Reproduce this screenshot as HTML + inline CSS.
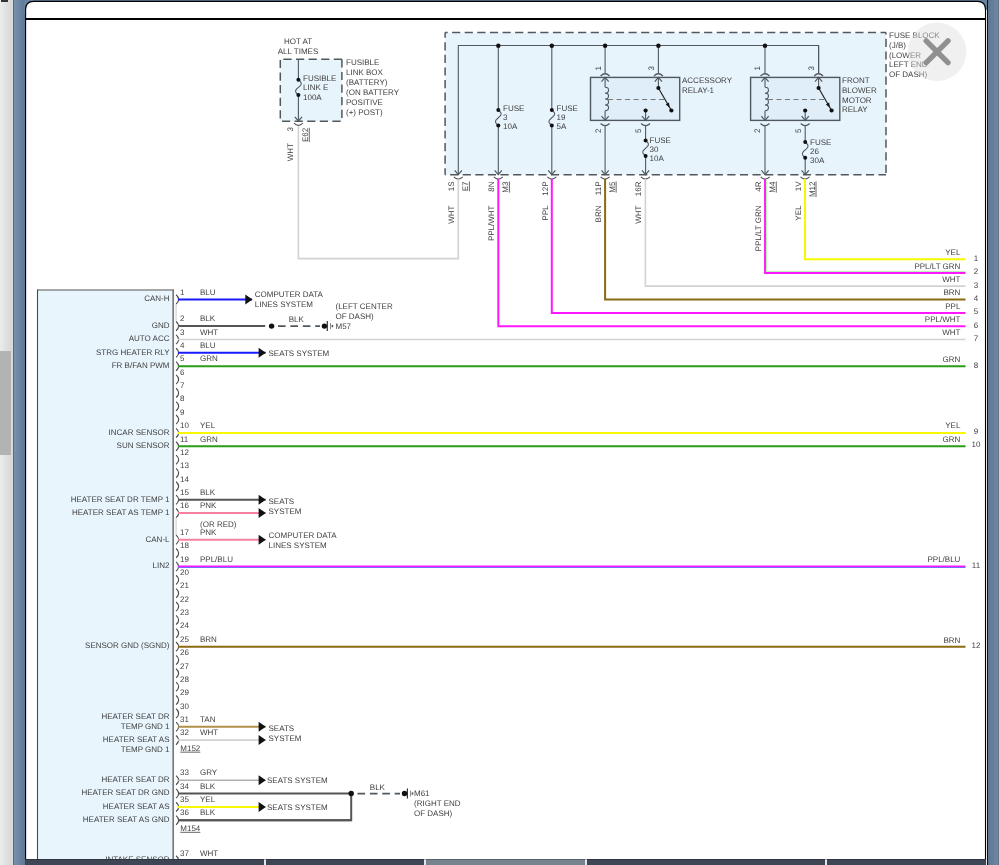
<!DOCTYPE html><html><head><meta charset="utf-8"><style>html,body{margin:0;padding:0;width:999px;height:865px;overflow:hidden;background:#fff}svg{display:block;will-change:transform}text{font-family:"Liberation Sans",sans-serif;text-rendering:geometricPrecision}</style></head><body>
<svg width="999" height="865" viewBox="0 0 999 865">
<defs><linearGradient id="bl" x1="0" x2="1" y1="0" y2="0"><stop offset="0" stop-color="#7791b0"/><stop offset="1" stop-color="#5d7592"/></linearGradient><linearGradient id="br" x1="0" x2="1" y1="0" y2="0"><stop offset="0" stop-color="#5c748e"/><stop offset="1" stop-color="#6f8aa8"/></linearGradient><linearGradient id="sb" x1="0" x2="1" y1="0" y2="0"><stop offset="0" stop-color="#ececec"/><stop offset="1" stop-color="#d6d6d6"/></linearGradient></defs>
<rect x="0" y="0" width="12" height="865" fill="url(#sb)"/>
<rect x="0" y="351" width="11" height="104" fill="#b3b3b3"/>
<rect x="11" y="0" width="2" height="865" fill="#dcd8de"/>
<rect x="13" y="0" width="1.2" height="865" fill="#66685c"/>
<rect x="14" y="0" width="12" height="865" fill="url(#bl)"/>
<rect x="987" y="0" width="12" height="865" fill="url(#br)"/>
<rect x="998" y="0" width="1" height="865" fill="#6a727c"/>
<rect x="24" y="0" width="964" height="14" fill="#6783a0"/>
<path d="M1,0 h7 v2 h-7 z" fill="#333"/>
<path d="M25.6,865 V9.6 C25.6,4.5 28.5,1.4 33.6,1.4 H977.5 C982.6,1.4 985.5,4.5 985.5,9.6 V865 Z" fill="#fff" stroke="#000" stroke-width="1.1"/>
<rect x="986" y="10" width="1" height="865" fill="#e4e4e4"/>
<rect x="987" y="0" width="1" height="865" fill="#0a1420"/>
<line x1="25" y1="19" x2="986" y2="19" stroke="#000" stroke-width="1.8"/>
<rect x="280.3" y="59.3" width="61.599999999999966" height="62.0" fill="#e8f4fc"/>
<line x1="280.3" y1="59.3" x2="341.9" y2="59.3" stroke="#50585e" stroke-width="1.5" stroke-dasharray="8.2 4.4" stroke-dashoffset="9.5"/>
<line x1="280.3" y1="59.3" x2="280.3" y2="121.3" stroke="#50585e" stroke-width="1.5" stroke-dasharray="8.2 4.4" stroke-dashoffset="12.0"/>
<line x1="341.9" y1="59.3" x2="341.9" y2="121.3" stroke="#50585e" stroke-width="1.5" stroke-dasharray="8.2 4.4" stroke-dashoffset="0.0"/>
<line x1="280.3" y1="121.3" x2="341.9" y2="121.3" stroke="#50585e" stroke-width="1.5" stroke-dasharray="8.2 4.4" stroke-dashoffset="10.9"/>
<text x="298" y="43.8" text-anchor="middle" font-size="8" fill="#3f3f3f" >HOT AT</text>
<text x="298" y="53.8" text-anchor="middle" font-size="8" fill="#3f3f3f" >ALL TIMES</text>
<text x="346" y="65" text-anchor="start" font-size="8" fill="#3f3f3f" >FUSIBLE</text>
<text x="346" y="75" text-anchor="start" font-size="8" fill="#3f3f3f" >LINK BOX</text>
<text x="346" y="85" text-anchor="start" font-size="8" fill="#3f3f3f" >(BATTERY)</text>
<text x="346" y="95" text-anchor="start" font-size="8" fill="#3f3f3f" >(ON BATTERY</text>
<text x="346" y="105" text-anchor="start" font-size="8" fill="#3f3f3f" >POSITIVE</text>
<text x="346" y="115" text-anchor="start" font-size="8" fill="#3f3f3f" >(+) POST)</text>
<line x1="298.4" y1="59.5" x2="298.4" y2="79.7" stroke="#50585e" stroke-width="1.1" />
<line x1="298.4" y1="95" x2="298.4" y2="121" stroke="#50585e" stroke-width="1.1" />
<path d="M298.40,79.70 L299.27,80.47 L300.05,81.23 L300.67,82.00 L301.06,82.76 L301.20,83.53 L301.06,84.29 L300.67,85.06 L300.05,85.82 L299.27,86.59 L298.40,87.35 L297.53,88.12 L296.75,88.88 L296.13,89.64 L295.74,90.41 L295.60,91.17 L295.74,91.94 L296.13,92.70 L296.75,93.47 L297.53,94.23 L298.40,95.00" stroke="#50585e" stroke-width="1.1" fill="none" />
<text x="303" y="80.7" text-anchor="start" font-size="8" fill="#3f3f3f" >FUSIBLE</text>
<text x="303" y="90.2" text-anchor="start" font-size="8" fill="#3f3f3f" >LINK E</text>
<text x="303" y="99.7" text-anchor="start" font-size="8" fill="#3f3f3f" >100A</text>
<path d="M294.79999999999995,116.8 L298.4,121 L302.0,116.8" stroke="#50585e" stroke-width="1.2" fill="none" />
<path d="M293.9,123.2 Q298.4,127.7 302.9,123.2" stroke="#50585e" stroke-width="1.2" fill="none" />
<text transform="translate(292.8,127) rotate(-90)" text-anchor="end" font-size="8" fill="#3f3f3f">3</text>
<text transform="translate(307.8,127.8) rotate(-90)" text-anchor="end" font-size="8" fill="#3f3f3f" text-decoration="underline">E62</text>
<text transform="translate(292.8,143) rotate(-90)" text-anchor="end" font-size="8" fill="#3f3f3f">WHT</text>
<rect x="445.1" y="32.6" width="440.9" height="142.1" fill="#e8f4fc"/>
<line x1="445.1" y1="32.6" x2="886" y2="32.6" stroke="#50585e" stroke-width="1.5" stroke-dasharray="8.2 4.4" stroke-dashoffset="5.6"/>
<line x1="445.1" y1="32.6" x2="445.1" y2="174.7" stroke="#50585e" stroke-width="1.5" stroke-dasharray="8.2 4.4" stroke-dashoffset="3.0"/>
<line x1="886" y1="32.6" x2="886" y2="174.7" stroke="#50585e" stroke-width="1.5" stroke-dasharray="8.2 4.4" stroke-dashoffset="6.4"/>
<line x1="445.1" y1="174.7" x2="886" y2="174.7" stroke="#50585e" stroke-width="1.5" stroke-dasharray="8.2 4.4" stroke-dashoffset="7.6"/>
<text x="889" y="37.9" text-anchor="start" font-size="8" fill="#3f3f3f" >FUSE BLOCK</text>
<text x="889" y="47.7" text-anchor="start" font-size="8" fill="#3f3f3f" >(J/B)</text>
<text x="889" y="57.5" text-anchor="start" font-size="8" fill="#3f3f3f" >(LOWER</text>
<text x="889" y="67.3" text-anchor="start" font-size="8" fill="#3f3f3f" >LEFT END</text>
<text x="889" y="77.1" text-anchor="start" font-size="8" fill="#3f3f3f" >OF DASH)</text>
<path d="M458.3,174.6 V45.5 H818.6 V73.8" stroke="#50585e" stroke-width="1.1" fill="none" />
<line x1="498.3" y1="45.5" x2="498.3" y2="110" stroke="#50585e" stroke-width="1.1" />
<line x1="498.3" y1="125.5" x2="498.3" y2="174.6" stroke="#50585e" stroke-width="1.1" />
<path d="M498.30,110.00 L499.17,110.78 L499.95,111.55 L500.57,112.33 L500.96,113.10 L501.10,113.88 L500.96,114.65 L500.57,115.42 L499.95,116.20 L499.17,116.97 L498.30,117.75 L497.43,118.53 L496.65,119.30 L496.03,120.08 L495.64,120.85 L495.50,121.62 L495.64,122.40 L496.03,123.17 L496.65,123.95 L497.43,124.72 L498.30,125.50" stroke="#50585e" stroke-width="1.1" fill="none" />
<text x="503" y="110.8" text-anchor="start" font-size="8" fill="#3f3f3f" >FUSE</text>
<text x="503" y="119.7" text-anchor="start" font-size="8" fill="#3f3f3f" >3</text>
<text x="503" y="128.6" text-anchor="start" font-size="8" fill="#3f3f3f" >10A</text>
<line x1="551.8" y1="45.5" x2="551.8" y2="110" stroke="#50585e" stroke-width="1.1" />
<line x1="551.8" y1="125.5" x2="551.8" y2="174.6" stroke="#50585e" stroke-width="1.1" />
<path d="M551.80,110.00 L552.67,110.78 L553.45,111.55 L554.07,112.33 L554.46,113.10 L554.60,113.88 L554.46,114.65 L554.07,115.42 L553.45,116.20 L552.67,116.97 L551.80,117.75 L550.93,118.53 L550.15,119.30 L549.53,120.08 L549.14,120.85 L549.00,121.62 L549.14,122.40 L549.53,123.17 L550.15,123.95 L550.93,124.72 L551.80,125.50" stroke="#50585e" stroke-width="1.1" fill="none" />
<text x="556.5" y="110.8" text-anchor="start" font-size="8" fill="#3f3f3f" >FUSE</text>
<text x="556.5" y="119.7" text-anchor="start" font-size="8" fill="#3f3f3f" >19</text>
<text x="556.5" y="128.6" text-anchor="start" font-size="8" fill="#3f3f3f" >5A</text>
<path d="M454.7,170.4 L458.3,174.6 L461.90000000000003,170.4" stroke="#50585e" stroke-width="1.2" fill="none" />
<path d="M494.7,170.4 L498.3,174.6 L501.90000000000003,170.4" stroke="#50585e" stroke-width="1.2" fill="none" />
<path d="M548.1999999999999,170.4 L551.8,174.6 L555.4,170.4" stroke="#50585e" stroke-width="1.2" fill="none" />
<rect x="590.5" y="77.4" width="89.2" height="43" fill="#dfeef9" stroke="#50585e" stroke-width="1.4"/>
<line x1="605.1" y1="45.5" x2="605.1" y2="73.5" stroke="#50585e" stroke-width="1.1" />
<path d="M600.6,76 Q605.1,71.5 609.6,76" stroke="#50585e" stroke-width="1.2" fill="none" />
<path d="M601.5,81.60000000000001 L605.1,77.4 L608.7,81.60000000000001" stroke="#50585e" stroke-width="1.2" fill="none" />
<line x1="605.1" y1="77.4" x2="605.1" y2="87.2" stroke="#50585e" stroke-width="1.1" />
<path d="M605.1,87.2 C609.7,87.2 609.7,93.075 605.1,93.075 C609.7,93.075 609.7,98.95 605.1,98.95 C609.7,98.95 609.7,104.825 605.1,104.825 C609.7,104.825 609.7,110.7 605.1,110.7" stroke="#50585e" stroke-width="1.1" fill="none" />
<line x1="605.1" y1="110.7" x2="605.1" y2="120.4" stroke="#50585e" stroke-width="1.1" />
<path d="M601.5,116.2 L605.1,120.4 L608.7,116.2" stroke="#50585e" stroke-width="1.2" fill="none" />
<line x1="608.1" y1="99.5" x2="664.4" y2="99.5" stroke="#777" stroke-width="1.0" stroke-dasharray="5 3.5"/>
<line x1="658.4" y1="45.5" x2="658.4" y2="73.5" stroke="#50585e" stroke-width="1.1" />
<path d="M653.9,76 Q658.4,71.5 662.9,76" stroke="#50585e" stroke-width="1.2" fill="none" />
<path d="M654.8,81.60000000000001 L658.4,77.4 L662.0,81.60000000000001" stroke="#50585e" stroke-width="1.2" fill="none" />
<line x1="658.4" y1="77.4" x2="658.4" y2="88" stroke="#50585e" stroke-width="1.1" />
<line x1="658.4" y1="88" x2="671.4" y2="110.5" stroke="#222" stroke-width="1.2" />
<path d="M669.60,107.40 L669.00,102.55 L665.70,104.45 Z" fill="#111"/>
<line x1="645.6" y1="110.5" x2="645.6" y2="120.4" stroke="#50585e" stroke-width="1.1" />
<path d="M642.0,116.2 L645.6,120.4 L649.2,116.2" stroke="#50585e" stroke-width="1.2" fill="none" />
<path d="M600.6,123.5 Q605.1,128.0 609.6,123.5" stroke="#50585e" stroke-width="1.2" fill="none" />
<path d="M641.1,123.5 Q645.6,128.0 650.1,123.5" stroke="#50585e" stroke-width="1.2" fill="none" />
<text x="682" y="82.8" text-anchor="start" font-size="8" fill="#3f3f3f" >ACCESSORY</text>
<text x="682" y="92.6" text-anchor="start" font-size="8" fill="#3f3f3f" >RELAY-1</text>
<rect x="750.6" y="77.4" width="89.2" height="43" fill="#dfeef9" stroke="#50585e" stroke-width="1.4"/>
<line x1="765.0" y1="45.5" x2="765.0" y2="73.5" stroke="#50585e" stroke-width="1.1" />
<path d="M760.5,76 Q765.0,71.5 769.5,76" stroke="#50585e" stroke-width="1.2" fill="none" />
<path d="M761.4,81.60000000000001 L765.0,77.4 L768.6,81.60000000000001" stroke="#50585e" stroke-width="1.2" fill="none" />
<line x1="765.0" y1="77.4" x2="765.0" y2="87.2" stroke="#50585e" stroke-width="1.1" />
<path d="M765.0,87.2 C769.6,87.2 769.6,93.075 765.0,93.075 C769.6,93.075 769.6,98.95 765.0,98.95 C769.6,98.95 769.6,104.825 765.0,104.825 C769.6,104.825 769.6,110.7 765.0,110.7" stroke="#50585e" stroke-width="1.1" fill="none" />
<line x1="765.0" y1="110.7" x2="765.0" y2="120.4" stroke="#50585e" stroke-width="1.1" />
<path d="M761.4,116.2 L765.0,120.4 L768.6,116.2" stroke="#50585e" stroke-width="1.2" fill="none" />
<line x1="768.0" y1="99.5" x2="824.6" y2="99.5" stroke="#777" stroke-width="1.0" stroke-dasharray="5 3.5"/>
<line x1="818.6" y1="45.5" x2="818.6" y2="73.5" stroke="#50585e" stroke-width="1.1" />
<path d="M814.1,76 Q818.6,71.5 823.1,76" stroke="#50585e" stroke-width="1.2" fill="none" />
<path d="M815.0,81.60000000000001 L818.6,77.4 L822.2,81.60000000000001" stroke="#50585e" stroke-width="1.2" fill="none" />
<line x1="818.6" y1="77.4" x2="818.6" y2="88" stroke="#50585e" stroke-width="1.1" />
<line x1="818.6" y1="88" x2="831.6" y2="110.5" stroke="#222" stroke-width="1.2" />
<path d="M829.80,107.40 L829.20,102.55 L825.90,104.45 Z" fill="#111"/>
<line x1="805.2" y1="110.5" x2="805.2" y2="120.4" stroke="#50585e" stroke-width="1.1" />
<path d="M801.6,116.2 L805.2,120.4 L808.8000000000001,116.2" stroke="#50585e" stroke-width="1.2" fill="none" />
<path d="M760.5,123.5 Q765.0,128.0 769.5,123.5" stroke="#50585e" stroke-width="1.2" fill="none" />
<path d="M800.7,123.5 Q805.2,128.0 809.7,123.5" stroke="#50585e" stroke-width="1.2" fill="none" />
<text x="842" y="82.9" text-anchor="start" font-size="8" fill="#3f3f3f" >FRONT</text>
<text x="842" y="92.7" text-anchor="start" font-size="8" fill="#3f3f3f" >BLOWER</text>
<text x="842" y="102.5" text-anchor="start" font-size="8" fill="#3f3f3f" >MOTOR</text>
<text x="842" y="112.3" text-anchor="start" font-size="8" fill="#3f3f3f" >RELAY</text>
<text transform="translate(600.5,66) rotate(-90)" text-anchor="end" font-size="8" fill="#3f3f3f">1</text>
<text transform="translate(653.8,66) rotate(-90)" text-anchor="end" font-size="8" fill="#3f3f3f">3</text>
<text transform="translate(760.4,66) rotate(-90)" text-anchor="end" font-size="8" fill="#3f3f3f">1</text>
<text transform="translate(814.0,66) rotate(-90)" text-anchor="end" font-size="8" fill="#3f3f3f">3</text>
<text transform="translate(600.5,128.5) rotate(-90)" text-anchor="end" font-size="8" fill="#3f3f3f">2</text>
<text transform="translate(641.0,128.5) rotate(-90)" text-anchor="end" font-size="8" fill="#3f3f3f">5</text>
<text transform="translate(760.4,128.5) rotate(-90)" text-anchor="end" font-size="8" fill="#3f3f3f">2</text>
<text transform="translate(800.6,128.5) rotate(-90)" text-anchor="end" font-size="8" fill="#3f3f3f">5</text>
<line x1="605.1" y1="125" x2="605.1" y2="174.6" stroke="#50585e" stroke-width="1.1" />
<path d="M601.5,170.4 L605.1,174.6 L608.7,170.4" stroke="#50585e" stroke-width="1.2" fill="none" />
<line x1="645.6" y1="125" x2="645.6" y2="140.5" stroke="#50585e" stroke-width="1.1" />
<line x1="645.6" y1="156" x2="645.6" y2="174.6" stroke="#50585e" stroke-width="1.1" />
<path d="M645.60,140.50 L646.47,141.28 L647.25,142.05 L647.87,142.82 L648.26,143.60 L648.40,144.38 L648.26,145.15 L647.87,145.93 L647.25,146.70 L646.47,147.47 L645.60,148.25 L644.73,149.03 L643.95,149.80 L643.33,150.57 L642.94,151.35 L642.80,152.12 L642.94,152.90 L643.33,153.68 L643.95,154.45 L644.73,155.22 L645.60,156.00" stroke="#50585e" stroke-width="1.1" fill="none" />
<text x="649.6" y="142.9" text-anchor="start" font-size="8" fill="#3f3f3f" >FUSE</text>
<text x="649.6" y="151.9" text-anchor="start" font-size="8" fill="#3f3f3f" >30</text>
<text x="649.6" y="160.9" text-anchor="start" font-size="8" fill="#3f3f3f" >10A</text>
<path d="M642.0,170.4 L645.6,174.6 L649.2,170.4" stroke="#50585e" stroke-width="1.2" fill="none" />
<line x1="765.0" y1="125" x2="765.0" y2="174.6" stroke="#50585e" stroke-width="1.1" />
<path d="M761.4,170.4 L765.0,174.6 L768.6,170.4" stroke="#50585e" stroke-width="1.2" fill="none" />
<line x1="805.2" y1="125" x2="805.2" y2="142" stroke="#50585e" stroke-width="1.1" />
<line x1="805.2" y1="157.8" x2="805.2" y2="174.6" stroke="#50585e" stroke-width="1.1" />
<path d="M805.20,142.00 L806.07,142.79 L806.85,143.58 L807.47,144.37 L807.86,145.16 L808.00,145.95 L807.86,146.74 L807.47,147.53 L806.85,148.32 L806.07,149.11 L805.20,149.90 L804.33,150.69 L803.55,151.48 L802.93,152.27 L802.54,153.06 L802.40,153.85 L802.54,154.64 L802.93,155.43 L803.55,156.22 L804.33,157.01 L805.20,157.80" stroke="#50585e" stroke-width="1.1" fill="none" />
<text x="810" y="144.9" text-anchor="start" font-size="8" fill="#3f3f3f" >FUSE</text>
<text x="810" y="153.8" text-anchor="start" font-size="8" fill="#3f3f3f" >26</text>
<text x="810" y="162.7" text-anchor="start" font-size="8" fill="#3f3f3f" >30A</text>
<path d="M801.6,170.4 L805.2,174.6 L808.8000000000001,170.4" stroke="#50585e" stroke-width="1.2" fill="none" />
<path d="M453.8,176.8 Q458.3,181.3 462.8,176.8" stroke="#50585e" stroke-width="1.2" fill="none" />
<text transform="translate(454.1,181.5) rotate(-90)" text-anchor="end" font-size="8" fill="#3f3f3f">1S</text>
<text transform="translate(467.90000000000003,181.5) rotate(-90)" text-anchor="end" font-size="8" fill="#3f3f3f" text-decoration="underline">E7</text>
<text transform="translate(454.1,205.5) rotate(-90)" text-anchor="end" font-size="8" fill="#3f3f3f">WHT</text>
<path d="M493.8,176.8 Q498.3,181.3 502.8,176.8" stroke="#50585e" stroke-width="1.2" fill="none" />
<text transform="translate(494.1,181.5) rotate(-90)" text-anchor="end" font-size="8" fill="#3f3f3f">8N</text>
<text transform="translate(507.90000000000003,181.5) rotate(-90)" text-anchor="end" font-size="8" fill="#3f3f3f" text-decoration="underline">M3</text>
<text transform="translate(494.1,205.5) rotate(-90)" text-anchor="end" font-size="8" fill="#3f3f3f">PPL/WHT</text>
<path d="M547.3,176.8 Q551.8,181.3 556.3,176.8" stroke="#50585e" stroke-width="1.2" fill="none" />
<text transform="translate(547.5999999999999,181.5) rotate(-90)" text-anchor="end" font-size="8" fill="#3f3f3f">12P</text>
<text transform="translate(547.5999999999999,205.5) rotate(-90)" text-anchor="end" font-size="8" fill="#3f3f3f">PPL</text>
<path d="M600.6,176.8 Q605.1,181.3 609.6,176.8" stroke="#50585e" stroke-width="1.2" fill="none" />
<text transform="translate(600.9,181.5) rotate(-90)" text-anchor="end" font-size="8" fill="#3f3f3f">11P</text>
<text transform="translate(614.7,181.5) rotate(-90)" text-anchor="end" font-size="8" fill="#3f3f3f" text-decoration="underline">M5</text>
<text transform="translate(600.9,205.5) rotate(-90)" text-anchor="end" font-size="8" fill="#3f3f3f">BRN</text>
<path d="M640.9,176.8 Q645.4,181.3 649.9,176.8" stroke="#50585e" stroke-width="1.2" fill="none" />
<text transform="translate(641.1999999999999,181.5) rotate(-90)" text-anchor="end" font-size="8" fill="#3f3f3f">16R</text>
<text transform="translate(641.1999999999999,205.5) rotate(-90)" text-anchor="end" font-size="8" fill="#3f3f3f">WHT</text>
<path d="M760.7,176.8 Q765.2,181.3 769.7,176.8" stroke="#50585e" stroke-width="1.2" fill="none" />
<text transform="translate(761.0,181.5) rotate(-90)" text-anchor="end" font-size="8" fill="#3f3f3f">4R</text>
<text transform="translate(774.8000000000001,181.5) rotate(-90)" text-anchor="end" font-size="8" fill="#3f3f3f" text-decoration="underline">M4</text>
<text transform="translate(761.0,205.5) rotate(-90)" text-anchor="end" font-size="8" fill="#3f3f3f">PPL/LT GRN</text>
<path d="M800.5,176.8 Q805.0,181.3 809.5,176.8" stroke="#50585e" stroke-width="1.2" fill="none" />
<text transform="translate(800.8,181.5) rotate(-90)" text-anchor="end" font-size="8" fill="#3f3f3f">1V</text>
<text transform="translate(814.6,181.5) rotate(-90)" text-anchor="end" font-size="8" fill="#3f3f3f" text-decoration="underline">M12</text>
<text transform="translate(800.8,205.5) rotate(-90)" text-anchor="end" font-size="8" fill="#3f3f3f">YEL</text>
<path d="M298.4,126 V258.6 H458.3 V179" stroke="#d2d2d2" stroke-width="1.6" fill="none" stroke-linejoin="miter"/>
<path d="M498.3,179 V326.2 H965.5" stroke="#ff18ff" stroke-width="2.0" fill="none" stroke-linejoin="miter"/>
<path d="M551.8,179 V312.9 H965.5" stroke="#ff18ff" stroke-width="2.0" fill="none" stroke-linejoin="miter"/>
<path d="M605.1,179 V299.4 H965.5" stroke="#8c6a12" stroke-width="2.0" fill="none" stroke-linejoin="miter"/>
<path d="M645.4,179 V286.1 H965.5" stroke="#d2d2d2" stroke-width="1.6" fill="none" stroke-linejoin="miter"/>
<path d="M765.0,179 V273.0 H965.5" stroke="#ff18ff" stroke-width="1.9" fill="none" stroke-linejoin="miter"/>
<path d="M766.5,179 V271.5 H965.5" stroke="#b8f5b0" stroke-width="1.0" fill="none" stroke-linejoin="miter"/>
<path d="M805.0,179 V259.3 H965.5" stroke="#f8f800" stroke-width="2.0" fill="none" stroke-linejoin="miter"/>
<text x="960.4" y="255.0" text-anchor="end" font-size="8" fill="#3f3f3f" >YEL</text>
<text x="976" y="260.7" text-anchor="middle" font-size="8" fill="#3f3f3f" >1</text>
<text x="960.4" y="268.6" text-anchor="end" font-size="8" fill="#3f3f3f" >PPL/LT GRN</text>
<text x="976" y="274.3" text-anchor="middle" font-size="8" fill="#3f3f3f" >2</text>
<text x="960.4" y="281.8" text-anchor="end" font-size="8" fill="#3f3f3f" >WHT</text>
<text x="976" y="287.5" text-anchor="middle" font-size="8" fill="#3f3f3f" >3</text>
<text x="960.4" y="295.1" text-anchor="end" font-size="8" fill="#3f3f3f" >BRN</text>
<text x="976" y="300.8" text-anchor="middle" font-size="8" fill="#3f3f3f" >4</text>
<text x="960.4" y="308.6" text-anchor="end" font-size="8" fill="#3f3f3f" >PPL</text>
<text x="976" y="314.3" text-anchor="middle" font-size="8" fill="#3f3f3f" >5</text>
<text x="960.4" y="321.9" text-anchor="end" font-size="8" fill="#3f3f3f" >PPL/WHT</text>
<text x="976" y="327.6" text-anchor="middle" font-size="8" fill="#3f3f3f" >6</text>
<text x="960.4" y="335.2" text-anchor="end" font-size="8" fill="#3f3f3f" >WHT</text>
<text x="976" y="340.9" text-anchor="middle" font-size="8" fill="#3f3f3f" >7</text>
<text x="960.4" y="361.8" text-anchor="end" font-size="8" fill="#3f3f3f" >GRN</text>
<text x="976" y="367.5" text-anchor="middle" font-size="8" fill="#3f3f3f" >8</text>
<text x="960.4" y="428.4" text-anchor="end" font-size="8" fill="#3f3f3f" >YEL</text>
<text x="976" y="434.1" text-anchor="middle" font-size="8" fill="#3f3f3f" >9</text>
<text x="960.4" y="441.6" text-anchor="end" font-size="8" fill="#3f3f3f" >GRN</text>
<text x="976" y="447.3" text-anchor="middle" font-size="8" fill="#3f3f3f" >10</text>
<text x="960.4" y="562.0" text-anchor="end" font-size="8" fill="#3f3f3f" >PPL/BLU</text>
<text x="976" y="567.7" text-anchor="middle" font-size="8" fill="#3f3f3f" >11</text>
<text x="960.4" y="642.6" text-anchor="end" font-size="8" fill="#3f3f3f" >BRN</text>
<text x="976" y="648.3" text-anchor="middle" font-size="8" fill="#3f3f3f" >12</text>
<rect x="38" y="290" width="135.2" height="600" fill="#e8f5fd"/>
<line x1="37" y1="290" x2="174" y2="290" stroke="#8a8a8a" stroke-width="1.6"/>
<line x1="37.5" y1="289.5" x2="37.5" y2="865" stroke="#4a4a4a" stroke-width="1.1"/>
<line x1="173.2" y1="289.5" x2="173.2" y2="865" stroke="#7a7a7a" stroke-width="1.7"/>
<line x1="176.1" y1="304.4" x2="176.1" y2="321.11" stroke="#cccccc" stroke-width="1"/>
<line x1="176.1" y1="518.08" x2="176.1" y2="534.79" stroke="#cccccc" stroke-width="1"/>
<path d="M176.1,294.79999999999995 Q181.2,299.4 176.1,304.0" stroke="#4a4a4a" stroke-width="1.15" fill="none" />
<text x="180" y="294.6" text-anchor="start" font-size="8" fill="#3f3f3f" >1</text>
<path d="M176.1,321.51 Q181.2,326.11 176.1,330.71000000000004" stroke="#4a4a4a" stroke-width="1.15" fill="none" />
<text x="180" y="321.31" text-anchor="start" font-size="8" fill="#3f3f3f" >2</text>
<path d="M176.1,334.85999999999996 Q181.2,339.46 176.1,344.06" stroke="#4a4a4a" stroke-width="1.15" fill="none" />
<text x="180" y="334.66" text-anchor="start" font-size="8" fill="#3f3f3f" >3</text>
<path d="M176.1,348.21999999999997 Q181.2,352.82 176.1,357.42" stroke="#4a4a4a" stroke-width="1.15" fill="none" />
<text x="180" y="348.02" text-anchor="start" font-size="8" fill="#3f3f3f" >4</text>
<path d="M176.1,361.57 Q181.2,366.17 176.1,370.77000000000004" stroke="#4a4a4a" stroke-width="1.15" fill="none" />
<text x="180" y="361.37" text-anchor="start" font-size="8" fill="#3f3f3f" >5</text>
<path d="M176.1,374.92999999999995 Q181.2,379.53 176.1,384.13" stroke="#4a4a4a" stroke-width="1.15" fill="none" />
<text x="180" y="374.73" text-anchor="start" font-size="8" fill="#3f3f3f" >6</text>
<path d="M176.1,388.28 Q181.2,392.88 176.1,397.48" stroke="#4a4a4a" stroke-width="1.15" fill="none" />
<text x="180" y="388.08" text-anchor="start" font-size="8" fill="#3f3f3f" >7</text>
<path d="M176.1,401.64 Q181.2,406.24 176.1,410.84000000000003" stroke="#4a4a4a" stroke-width="1.15" fill="none" />
<text x="180" y="401.44" text-anchor="start" font-size="8" fill="#3f3f3f" >8</text>
<path d="M176.1,414.98999999999995 Q181.2,419.59 176.1,424.19" stroke="#4a4a4a" stroke-width="1.15" fill="none" />
<text x="180" y="414.79" text-anchor="start" font-size="8" fill="#3f3f3f" >9</text>
<path d="M176.1,428.34999999999997 Q181.2,432.95 176.1,437.55" stroke="#4a4a4a" stroke-width="1.15" fill="none" />
<text x="180" y="428.15" text-anchor="start" font-size="8" fill="#3f3f3f" >10</text>
<path d="M176.1,441.7 Q181.2,446.3 176.1,450.90000000000003" stroke="#4a4a4a" stroke-width="1.15" fill="none" />
<text x="180" y="441.5" text-anchor="start" font-size="8" fill="#3f3f3f" >11</text>
<path d="M176.1,455.06 Q181.2,459.66 176.1,464.26000000000005" stroke="#4a4a4a" stroke-width="1.15" fill="none" />
<text x="180" y="454.86" text-anchor="start" font-size="8" fill="#3f3f3f" >12</text>
<path d="M176.1,468.40999999999997 Q181.2,473.01 176.1,477.61" stroke="#4a4a4a" stroke-width="1.15" fill="none" />
<text x="180" y="468.21" text-anchor="start" font-size="8" fill="#3f3f3f" >13</text>
<path d="M176.1,481.77 Q181.2,486.37 176.1,490.97" stroke="#4a4a4a" stroke-width="1.15" fill="none" />
<text x="180" y="481.57" text-anchor="start" font-size="8" fill="#3f3f3f" >14</text>
<path d="M176.1,495.13 Q181.2,499.73 176.1,504.33000000000004" stroke="#4a4a4a" stroke-width="1.15" fill="none" />
<text x="180" y="494.93" text-anchor="start" font-size="8" fill="#3f3f3f" >15</text>
<path d="M176.1,508.48 Q181.2,513.08 176.1,517.6800000000001" stroke="#4a4a4a" stroke-width="1.15" fill="none" />
<text x="180" y="508.28" text-anchor="start" font-size="8" fill="#3f3f3f" >16</text>
<path d="M176.1,535.1899999999999 Q181.2,539.79 176.1,544.39" stroke="#4a4a4a" stroke-width="1.15" fill="none" />
<text x="180" y="534.99" text-anchor="start" font-size="8" fill="#3f3f3f" >17</text>
<path d="M176.1,548.54 Q181.2,553.14 176.1,557.74" stroke="#4a4a4a" stroke-width="1.15" fill="none" />
<text x="180" y="548.34" text-anchor="start" font-size="8" fill="#3f3f3f" >18</text>
<path d="M176.1,561.9 Q181.2,566.5 176.1,571.1" stroke="#4a4a4a" stroke-width="1.15" fill="none" />
<text x="180" y="561.7" text-anchor="start" font-size="8" fill="#3f3f3f" >19</text>
<path d="M176.1,575.26 Q181.2,579.86 176.1,584.46" stroke="#4a4a4a" stroke-width="1.15" fill="none" />
<text x="180" y="575.06" text-anchor="start" font-size="8" fill="#3f3f3f" >20</text>
<path d="M176.1,588.61 Q181.2,593.21 176.1,597.8100000000001" stroke="#4a4a4a" stroke-width="1.15" fill="none" />
<text x="180" y="588.41" text-anchor="start" font-size="8" fill="#3f3f3f" >21</text>
<path d="M176.1,601.97 Q181.2,606.57 176.1,611.1700000000001" stroke="#4a4a4a" stroke-width="1.15" fill="none" />
<text x="180" y="601.77" text-anchor="start" font-size="8" fill="#3f3f3f" >22</text>
<path d="M176.1,615.3199999999999 Q181.2,619.92 176.1,624.52" stroke="#4a4a4a" stroke-width="1.15" fill="none" />
<text x="180" y="615.12" text-anchor="start" font-size="8" fill="#3f3f3f" >23</text>
<path d="M176.1,628.67 Q181.2,633.27 176.1,637.87" stroke="#4a4a4a" stroke-width="1.15" fill="none" />
<text x="180" y="628.47" text-anchor="start" font-size="8" fill="#3f3f3f" >24</text>
<path d="M176.1,642.03 Q181.2,646.63 176.1,651.23" stroke="#4a4a4a" stroke-width="1.15" fill="none" />
<text x="180" y="641.83" text-anchor="start" font-size="8" fill="#3f3f3f" >25</text>
<path d="M176.1,655.39 Q181.2,659.99 176.1,664.59" stroke="#4a4a4a" stroke-width="1.15" fill="none" />
<text x="180" y="655.19" text-anchor="start" font-size="8" fill="#3f3f3f" >26</text>
<path d="M176.1,668.74 Q181.2,673.34 176.1,677.94" stroke="#4a4a4a" stroke-width="1.15" fill="none" />
<text x="180" y="668.54" text-anchor="start" font-size="8" fill="#3f3f3f" >27</text>
<path d="M176.1,682.09 Q181.2,686.69 176.1,691.2900000000001" stroke="#4a4a4a" stroke-width="1.15" fill="none" />
<text x="180" y="681.89" text-anchor="start" font-size="8" fill="#3f3f3f" >28</text>
<path d="M176.1,695.4499999999999 Q181.2,700.05 176.1,704.65" stroke="#4a4a4a" stroke-width="1.15" fill="none" />
<text x="180" y="695.25" text-anchor="start" font-size="8" fill="#3f3f3f" >29</text>
<path d="M176.1,708.8 Q181.2,713.4 176.1,718.0" stroke="#4a4a4a" stroke-width="1.15" fill="none" />
<text x="180" y="708.6" text-anchor="start" font-size="8" fill="#3f3f3f" >30</text>
<path d="M176.1,722.16 Q181.2,726.76 176.1,731.36" stroke="#4a4a4a" stroke-width="1.15" fill="none" />
<text x="180" y="721.96" text-anchor="start" font-size="8" fill="#3f3f3f" >31</text>
<path d="M176.1,735.52 Q181.2,740.12 176.1,744.72" stroke="#4a4a4a" stroke-width="1.15" fill="none" />
<text x="180" y="735.32" text-anchor="start" font-size="8" fill="#3f3f3f" >32</text>
<path d="M176.1,775.5799999999999 Q181.2,780.18 176.1,784.78" stroke="#4a4a4a" stroke-width="1.15" fill="none" />
<text x="180" y="775.38" text-anchor="start" font-size="8" fill="#3f3f3f" >33</text>
<path d="M176.1,788.93 Q181.2,793.53 176.1,798.13" stroke="#4a4a4a" stroke-width="1.15" fill="none" />
<text x="180" y="788.73" text-anchor="start" font-size="8" fill="#3f3f3f" >34</text>
<path d="M176.1,802.29 Q181.2,806.89 176.1,811.49" stroke="#4a4a4a" stroke-width="1.15" fill="none" />
<text x="180" y="802.09" text-anchor="start" font-size="8" fill="#3f3f3f" >35</text>
<path d="M176.1,815.65 Q181.2,820.25 176.1,824.85" stroke="#4a4a4a" stroke-width="1.15" fill="none" />
<text x="180" y="815.45" text-anchor="start" font-size="8" fill="#3f3f3f" >36</text>
<path d="M176.1,855.7099999999999 Q181.2,860.31 176.1,864.91" stroke="#4a4a4a" stroke-width="1.15" fill="none" />
<text x="180" y="855.51" text-anchor="start" font-size="8" fill="#3f3f3f" >37</text>
<path d="M178,299.4 H252" stroke="#1a1aff" stroke-width="2.0" fill="none" stroke-linejoin="miter"/>
<text x="200" y="294.6" text-anchor="start" font-size="8" fill="#3f3f3f" >BLU</text>
<path d="M178,326.11 H265.2" stroke="#555555" stroke-width="2.0" fill="none" stroke-linejoin="miter"/>
<text x="200" y="321.31" text-anchor="start" font-size="8" fill="#3f3f3f" >BLK</text>
<path d="M178,339.46 H965.5" stroke="#d2d2d2" stroke-width="1.6" fill="none" stroke-linejoin="miter"/>
<text x="200" y="334.66" text-anchor="start" font-size="8" fill="#3f3f3f" >WHT</text>
<path d="M178,352.82 H265.6" stroke="#1a1aff" stroke-width="2.0" fill="none" stroke-linejoin="miter"/>
<text x="200" y="348.02" text-anchor="start" font-size="8" fill="#3f3f3f" >BLU</text>
<path d="M178,366.17 H965.5" stroke="#2a9d14" stroke-width="2.0" fill="none" stroke-linejoin="miter"/>
<text x="200" y="361.37" text-anchor="start" font-size="8" fill="#3f3f3f" >GRN</text>
<path d="M178,432.95 H965.5" stroke="#f8f800" stroke-width="2.0" fill="none" stroke-linejoin="miter"/>
<text x="200" y="428.15" text-anchor="start" font-size="8" fill="#3f3f3f" >YEL</text>
<path d="M178,446.3 H965.5" stroke="#2a9d14" stroke-width="2.0" fill="none" stroke-linejoin="miter"/>
<text x="200" y="441.5" text-anchor="start" font-size="8" fill="#3f3f3f" >GRN</text>
<path d="M178,499.73 H265.6" stroke="#555555" stroke-width="2.0" fill="none" stroke-linejoin="miter"/>
<text x="200" y="494.93" text-anchor="start" font-size="8" fill="#3f3f3f" >BLK</text>
<path d="M178,513.08 H265.6" stroke="#f5809f" stroke-width="2.0" fill="none" stroke-linejoin="miter"/>
<text x="200" y="508.28" text-anchor="start" font-size="8" fill="#3f3f3f" >PNK</text>
<path d="M178,539.79 H265.6" stroke="#f5809f" stroke-width="2.0" fill="none" stroke-linejoin="miter"/>
<text x="200" y="534.99" text-anchor="start" font-size="8" fill="#3f3f3f" >PNK</text>
<path d="M178,566.5 H965.5" stroke="#ff18ff" stroke-width="2.0" fill="none" stroke-linejoin="miter"/>
<text x="200" y="561.7" text-anchor="start" font-size="8" fill="#3f3f3f" >PPL/BLU</text>
<path d="M178,646.63 H965.5" stroke="#8c6a12" stroke-width="2.0" fill="none" stroke-linejoin="miter"/>
<text x="200" y="641.83" text-anchor="start" font-size="8" fill="#3f3f3f" >BRN</text>
<path d="M178,726.76 H265.6" stroke="#b0904a" stroke-width="2.0" fill="none" stroke-linejoin="miter"/>
<text x="200" y="721.96" text-anchor="start" font-size="8" fill="#3f3f3f" >TAN</text>
<path d="M178,740.12 H265.6" stroke="#d2d2d2" stroke-width="1.6" fill="none" stroke-linejoin="miter"/>
<text x="200" y="735.32" text-anchor="start" font-size="8" fill="#3f3f3f" >WHT</text>
<path d="M178,780.18 H265.6" stroke="#b0b0b0" stroke-width="1.6" fill="none" stroke-linejoin="miter"/>
<text x="200" y="775.38" text-anchor="start" font-size="8" fill="#3f3f3f" >GRY</text>
<path d="M178,793.53 H351.2" stroke="#555555" stroke-width="2.0" fill="none" stroke-linejoin="miter"/>
<text x="200" y="788.73" text-anchor="start" font-size="8" fill="#3f3f3f" >BLK</text>
<path d="M178,806.89 H265.6" stroke="#f8f800" stroke-width="2.0" fill="none" stroke-linejoin="miter"/>
<text x="200" y="802.09" text-anchor="start" font-size="8" fill="#3f3f3f" >YEL</text>
<path d="M178,820.25 H351.2" stroke="#555555" stroke-width="2.0" fill="none" stroke-linejoin="miter"/>
<text x="200" y="815.45" text-anchor="start" font-size="8" fill="#3f3f3f" >BLK</text>
<path d="M178,860.31 H965.5" stroke="#d2d2d2" stroke-width="1.6" fill="none" stroke-linejoin="miter"/>
<text x="200" y="855.51" text-anchor="start" font-size="8" fill="#3f3f3f" >WHT</text>
<path d="M178,567.5 H965.5" stroke="#7070ff" stroke-width="1.0" fill="none" stroke-linejoin="miter"/>
<text x="200" y="526.94" text-anchor="start" font-size="8" fill="#3f3f3f" >(OR RED)</text>
<path d="M245.3,294.4 L252.5,299.4 L245.3,304.4 Z" fill="#111"/>
<path d="M258.6,347.82 L265.8,352.82 L258.6,357.82 Z" fill="#111"/>
<path d="M258.6,494.73 L265.8,499.73 L258.6,504.73 Z" fill="#111"/>
<path d="M258.6,508.08000000000004 L265.8,513.08 L258.6,518.08 Z" fill="#111"/>
<path d="M258.6,534.79 L265.8,539.79 L258.6,544.79 Z" fill="#111"/>
<path d="M258.6,721.76 L265.8,726.76 L258.6,731.76 Z" fill="#111"/>
<path d="M258.6,735.12 L265.8,740.12 L258.6,745.12 Z" fill="#111"/>
<path d="M258.6,775.18 L265.8,780.18 L258.6,785.18 Z" fill="#111"/>
<path d="M258.6,801.89 L265.8,806.89 L258.6,811.89 Z" fill="#111"/>
<text x="254.8" y="297.4" text-anchor="start" font-size="8" fill="#3f3f3f" >COMPUTER DATA</text>
<text x="254.8" y="307.4" text-anchor="start" font-size="8" fill="#3f3f3f" >LINES SYSTEM</text>
<text x="268.5" y="355.62" text-anchor="start" font-size="8" fill="#3f3f3f" >SEATS SYSTEM</text>
<text x="268.5" y="503.6" text-anchor="start" font-size="8" fill="#3f3f3f" >SEATS</text>
<text x="268.5" y="513.6" text-anchor="start" font-size="8" fill="#3f3f3f" >SYSTEM</text>
<text x="268.5" y="537.8" text-anchor="start" font-size="8" fill="#3f3f3f" >COMPUTER DATA</text>
<text x="268.5" y="547.8" text-anchor="start" font-size="8" fill="#3f3f3f" >LINES SYSTEM</text>
<text x="268.5" y="730.5" text-anchor="start" font-size="8" fill="#3f3f3f" >SEATS</text>
<text x="268.5" y="740.5" text-anchor="start" font-size="8" fill="#3f3f3f" >SYSTEM</text>
<text x="267" y="782.9799999999999" text-anchor="start" font-size="8" fill="#3f3f3f" >SEATS SYSTEM</text>
<text x="267" y="809.6899999999999" text-anchor="start" font-size="8" fill="#3f3f3f" >SEATS SYSTEM</text>
<line x1="278" y1="326.11" x2="320" y2="326.11" stroke="#50585e" stroke-width="1.8" stroke-dasharray="7.6 4.8"/>
<line x1="327.3" y1="321.11" x2="327.3" y2="331.11" stroke="#333" stroke-width="1.2" />
<line x1="330.5" y1="323.11" x2="330.5" y2="329.11" stroke="#888" stroke-width="1.0" />
<rect x="331.6" y="325.01" width="1.6" height="2.2" fill="#555"/>
<text x="296.2" y="322" text-anchor="middle" font-size="8" fill="#3f3f3f" >BLK</text>
<text x="335.5" y="328.91" text-anchor="start" font-size="8" fill="#3f3f3f" >M57</text>
<text x="335.5" y="308.6" text-anchor="start" font-size="8" fill="#3f3f3f" >(LEFT CENTER</text>
<text x="335.5" y="318.6" text-anchor="start" font-size="8" fill="#3f3f3f" >OF DASH)</text>
<path d="M178,820.25 H351.2 V793.53" stroke="#555555" stroke-width="2.0" fill="none" stroke-linejoin="miter"/>
<line x1="357.5" y1="793.53" x2="400" y2="793.53" stroke="#50585e" stroke-width="1.8" stroke-dasharray="7.6 4.8"/>
<line x1="407.4" y1="788.53" x2="407.4" y2="798.53" stroke="#333" stroke-width="1.2" />
<line x1="410.59999999999997" y1="790.53" x2="410.59999999999997" y2="796.53" stroke="#888" stroke-width="1.0" />
<rect x="411.7" y="792.43" width="1.6" height="2.2" fill="#555"/>
<text x="377.4" y="789.53" text-anchor="middle" font-size="8" fill="#3f3f3f" >BLK</text>
<text x="414" y="796.3299999999999" text-anchor="start" font-size="8" fill="#3f3f3f" >M61</text>
<text x="414" y="805.7" text-anchor="start" font-size="8" fill="#3f3f3f" >(RIGHT END</text>
<text x="414" y="815.7" text-anchor="start" font-size="8" fill="#3f3f3f" >OF DASH)</text>
<text x="180.3" y="750.72" text-anchor="start" font-size="8" fill="#3f3f3f" text-decoration="underline">M152</text>
<text x="180.3" y="830.85" text-anchor="start" font-size="8" fill="#3f3f3f" text-decoration="underline">M154</text>
<text x="169.5" y="301.2" text-anchor="end" font-size="8" fill="#3f3f3f" >CAN-H</text>
<text x="169.5" y="327.91" text-anchor="end" font-size="8" fill="#3f3f3f" >GND</text>
<text x="169.5" y="341.26" text-anchor="end" font-size="8" fill="#3f3f3f" >AUTO ACC</text>
<text x="169.5" y="354.62" text-anchor="end" font-size="8" fill="#3f3f3f" >STRG HEATER RLY</text>
<text x="169.5" y="367.97" text-anchor="end" font-size="8" fill="#3f3f3f" >FR B/FAN PWM</text>
<text x="169.5" y="434.75" text-anchor="end" font-size="8" fill="#3f3f3f" >INCAR SENSOR</text>
<text x="169.5" y="448.1" text-anchor="end" font-size="8" fill="#3f3f3f" >SUN SENSOR</text>
<text x="169.5" y="501.53" text-anchor="end" font-size="8" fill="#3f3f3f" >HEATER SEAT DR TEMP 1</text>
<text x="169.5" y="514.88" text-anchor="end" font-size="8" fill="#3f3f3f" >HEATER SEAT AS TEMP 1</text>
<text x="169.5" y="541.59" text-anchor="end" font-size="8" fill="#3f3f3f" >CAN-L</text>
<text x="169.5" y="568.3" text-anchor="end" font-size="8" fill="#3f3f3f" >LIN2</text>
<text x="169.5" y="648.43" text-anchor="end" font-size="8" fill="#3f3f3f" >SENSOR GND (SGND)</text>
<text x="169.5" y="781.98" text-anchor="end" font-size="8" fill="#3f3f3f" >HEATER SEAT DR</text>
<text x="169.5" y="795.33" text-anchor="end" font-size="8" fill="#3f3f3f" >HEATER SEAT DR GND</text>
<text x="169.5" y="808.69" text-anchor="end" font-size="8" fill="#3f3f3f" >HEATER SEAT AS</text>
<text x="169.5" y="822.05" text-anchor="end" font-size="8" fill="#3f3f3f" >HEATER SEAT AS GND</text>
<text x="169.5" y="862.11" text-anchor="end" font-size="8" fill="#3f3f3f" >INTAKE SENSOR</text>
<text x="169.5" y="718.86" text-anchor="end" font-size="8" fill="#3f3f3f" >HEATER SEAT DR</text>
<text x="169.5" y="728.86" text-anchor="end" font-size="8" fill="#3f3f3f" >TEMP GND 1</text>
<text x="169.5" y="741.92" text-anchor="end" font-size="8" fill="#3f3f3f" >HEATER SEAT AS</text>
<text x="169.5" y="751.92" text-anchor="end" font-size="8" fill="#3f3f3f" >TEMP GND 1</text>
<circle cx="298.4" cy="79.7" r="2.0" fill="#111"/>
<circle cx="298.4" cy="95" r="2.0" fill="#111"/>
<circle cx="498.3" cy="45.8" r="2.25" fill="#111"/>
<circle cx="551.8" cy="45.8" r="2.25" fill="#111"/>
<circle cx="605.1" cy="45.8" r="2.25" fill="#111"/>
<circle cx="658.4" cy="45.8" r="2.25" fill="#111"/>
<circle cx="765.0" cy="45.8" r="2.25" fill="#111"/>
<circle cx="498.3" cy="110" r="2.0" fill="#111"/>
<circle cx="498.3" cy="125.5" r="2.0" fill="#111"/>
<circle cx="551.8" cy="110" r="2.0" fill="#111"/>
<circle cx="551.8" cy="125.5" r="2.0" fill="#111"/>
<circle cx="658.4" cy="88" r="2.1" fill="#111"/>
<circle cx="671.4" cy="110.5" r="2.1" fill="#111"/>
<circle cx="645.6" cy="110.5" r="2.1" fill="#111"/>
<circle cx="818.6" cy="88" r="2.1" fill="#111"/>
<circle cx="831.6" cy="110.5" r="2.1" fill="#111"/>
<circle cx="805.2" cy="110.5" r="2.1" fill="#111"/>
<circle cx="645.6" cy="140.5" r="2.0" fill="#111"/>
<circle cx="645.6" cy="156" r="2.0" fill="#111"/>
<circle cx="805.2" cy="142" r="2.0" fill="#111"/>
<circle cx="805.2" cy="157.8" r="2.0" fill="#111"/>
<circle cx="271.6" cy="326.11" r="2.7" fill="#111"/>
<circle cx="324.4" cy="326.11" r="2.7" fill="#111"/>
<circle cx="351.2" cy="793.53" r="2.7" fill="#111"/>
<circle cx="404.5" cy="793.53" r="2.7" fill="#111"/>
<circle cx="937.1" cy="51.8" r="29.3" fill="#dedede" fill-opacity="0.45"/>
<path d="M926.2,40.9 L948,62.7 M948,40.9 L926.2,62.7" stroke="#909090" stroke-width="5.4" stroke-linecap="round"/>
<rect x="25" y="859" width="962" height="6" fill="#e2e6ea"/>
<rect x="25" y="859" width="239" height="6" fill="#3e4656"/>
<rect x="266" y="859" width="158" height="6" fill="#3e4656"/>
<rect x="426" y="859" width="159" height="6" fill="#76828c"/>
<rect x="587" y="859" width="238" height="6" fill="#3e4656"/>
<rect x="827" y="859" width="159" height="6" fill="#3e4656"/>
<rect x="25" y="859" width="961" height="1" fill="#000" fill-opacity="0.25"/>
</svg></body></html>
